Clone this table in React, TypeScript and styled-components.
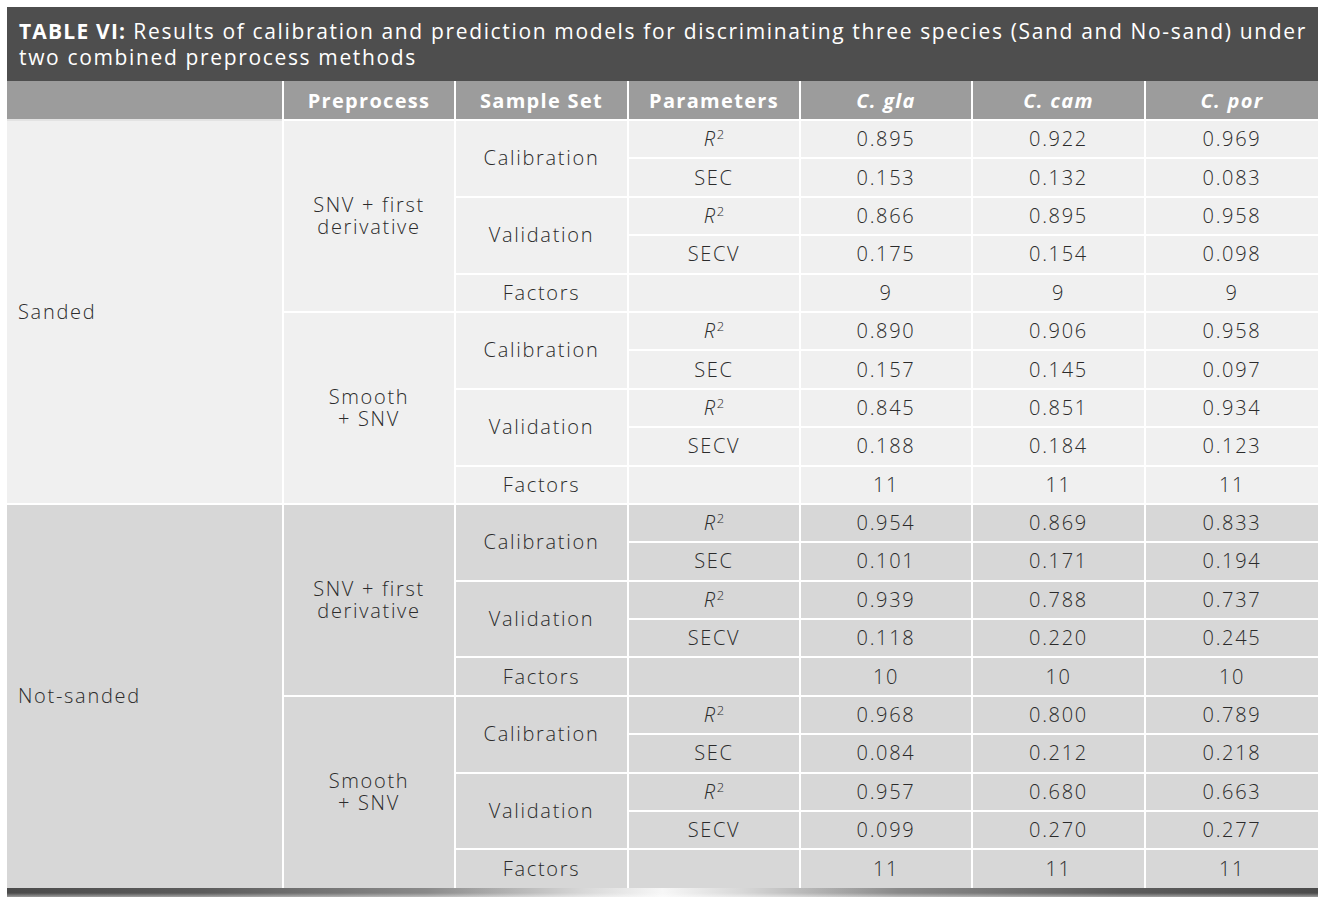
import React from "react";
import styled, { createGlobalStyle } from "styled-components";

const GlobalStyle = createGlobalStyle`
  html, body { margin: 0; padding: 0; background: #ffffff; }
  body { font-family: "Open Sans", "Liberation Sans", sans-serif; }
`;

const Page = styled.div`
  padding: 7px 10px 12px 7px;
  width: 1311px;
`;

const Caption = styled.div`
  background: #4e4e4e;
  color: #ffffff;
  font-size: 21px;
  line-height: 26px;
  padding: 11px 6px 11px 12px;
  letter-spacing: 1.65px;
  white-space: nowrap;
  overflow: hidden;
`;

const CaptionLabel = styled.span`
  font-weight: 700;
  letter-spacing: 1.2px;
`;

const Table = styled.table`
  width: 1311px;
  table-layout: fixed;
  border-collapse: collapse;
  border-style: hidden;
  font-size: 20px;
  color: #2b2b2b;
`;

const HeadCell = styled.th<{ $italic?: boolean }>`
  background: #9c9c9c;
  color: #ffffff;
  font-weight: 700;
  font-style: ${(p) => (p.$italic ? "italic" : "normal")};
  letter-spacing: 1.3px;
  height: 38px;
  padding: 0;
  text-align: center;
  border-left: 2px solid #ffffff;
  border-right: 2px solid #ffffff;
  &:first-child { border-left: none; }
`;

const Row = styled.tr<{ $dark: boolean }>`
  height: 38.4px;
  background: ${(p) => (p.$dark ? "#d7d7d7" : "#f0f0f0")};
`;

const Cell = styled.td<{ $align?: "left" | "center" }>`
  padding: 0 ${(p) => (p.$align === "left" ? "11px" : "4px")};
  text-align: ${(p) => p.$align ?? "center"};
  vertical-align: middle;
  border: 2px solid #ffffff;
  line-height: 22px;
  font-weight: 300;
  letter-spacing: 1.7px;
`;

const GroupCell = styled(Cell)`
  border-top-color: #e3e3e3;
`;

const Italic = styled.i`
  font-style: italic;
`;

const Sup = styled.sup`
  font-size: 13px;
  font-style: normal;
  vertical-align: 7px;
  line-height: 0;
  letter-spacing: 0;
`;

const BottomBar = styled.div`
  height: 9px;
  background:
    linear-gradient(to bottom, rgba(255,255,255,0) 0%, rgba(255,255,255,0) 55%, rgba(255,255,255,0.45) 100%),
    linear-gradient(to right, #4b4b4b 0%, #5c5c5c 15%, #8a8a8a 32%, #d8d8d8 44%, #f7f7f7 50%, #d8d8d8 56%, #8a8a8a 68%, #5c5c5c 85%, #4b4b4b 100%);
`;

type Vals = [string, string, string];

interface Method {
  name: string[];
  cal: { r2: Vals; sec: Vals };
  val: { r2: Vals; secv: Vals };
  factors: Vals;
}

interface Group {
  name: string;
  dark: boolean;
  methods: Method[];
}

const groups: Group[] = [
  {
    name: "Sanded",
    dark: false,
    methods: [
      {
        name: ["SNV + first", "derivative"],
        cal: { r2: ["0.895", "0.922", "0.969"], sec: ["0.153", "0.132", "0.083"] },
        val: { r2: ["0.866", "0.895", "0.958"], secv: ["0.175", "0.154", "0.098"] },
        factors: ["9", "9", "9"],
      },
      {
        name: ["Smooth", "+ SNV"],
        cal: { r2: ["0.890", "0.906", "0.958"], sec: ["0.157", "0.145", "0.097"] },
        val: { r2: ["0.845", "0.851", "0.934"], secv: ["0.188", "0.184", "0.123"] },
        factors: ["11", "11", "11"],
      },
    ],
  },
  {
    name: "Not-sanded",
    dark: true,
    methods: [
      {
        name: ["SNV + first", "derivative"],
        cal: { r2: ["0.954", "0.869", "0.833"], sec: ["0.101", "0.171", "0.194"] },
        val: { r2: ["0.939", "0.788", "0.737"], secv: ["0.118", "0.220", "0.245"] },
        factors: ["10", "10", "10"],
      },
      {
        name: ["Smooth", "+ SNV"],
        cal: { r2: ["0.968", "0.800", "0.789"], sec: ["0.084", "0.212", "0.218"] },
        val: { r2: ["0.957", "0.680", "0.663"], secv: ["0.099", "0.270", "0.277"] },
        factors: ["11", "11", "11"],
      },
    ],
  },
];

const R2 = () => (
  <>
    <Italic>R</Italic>
    <Sup>2</Sup>
  </>
);

const ValueCells = ({ v }: { v: Vals }) => (
  <>
    {v.map((x, i) => (
      <Cell key={i}>{x}</Cell>
    ))}
  </>
);

export default function App() {
  const rows: React.ReactNode[] = [];
  groups.forEach((g, gi) => {
    g.methods.forEach((m, mi) => {
      const first = mi === 0;
      rows.push(
        <Row $dark={g.dark} key={`${gi}-${mi}-1`}>
          {first && (
            <GroupCell rowSpan={10} $align="left">
              {g.name}
            </GroupCell>
          )}
          <Cell rowSpan={5}>
            {m.name[0]}
            <br />
            {m.name[1]}
          </Cell>
          <Cell rowSpan={2}>Calibration</Cell>
          <Cell>
            <R2 />
          </Cell>
          <ValueCells v={m.cal.r2} />
        </Row>,
        <Row $dark={g.dark} key={`${gi}-${mi}-2`}>
          <Cell>SEC</Cell>
          <ValueCells v={m.cal.sec} />
        </Row>,
        <Row $dark={g.dark} key={`${gi}-${mi}-3`}>
          <Cell rowSpan={2}>Validation</Cell>
          <Cell>
            <R2 />
          </Cell>
          <ValueCells v={m.val.r2} />
        </Row>,
        <Row $dark={g.dark} key={`${gi}-${mi}-4`}>
          <Cell>SECV</Cell>
          <ValueCells v={m.val.secv} />
        </Row>,
        <Row $dark={g.dark} key={`${gi}-${mi}-5`}>
          <Cell>Factors</Cell>
          <Cell />
          <ValueCells v={m.factors} />
        </Row>
      );
    });
  });

  return (
    <>
      <GlobalStyle />
      <Page>
        <Caption>
          <CaptionLabel>TABLE VI:</CaptionLabel> Results of calibration and prediction models for
          discriminating three species (Sand and No-sand) under
          <br />
          two combined preprocess methods
        </Caption>
        <Table>
          <colgroup>
            <col style={{ width: 276 }} />
            <col style={{ width: 172 }} />
            <col style={{ width: 173 }} />
            <col style={{ width: 172 }} />
            <col style={{ width: 172 }} />
            <col style={{ width: 173 }} />
            <col style={{ width: 173 }} />
          </colgroup>
          <thead>
            <tr>
              <HeadCell />
              <HeadCell>Preprocess</HeadCell>
              <HeadCell>Sample Set</HeadCell>
              <HeadCell>Parameters</HeadCell>
              <HeadCell $italic>C. gla</HeadCell>
              <HeadCell $italic>C. cam</HeadCell>
              <HeadCell $italic>C. por</HeadCell>
            </tr>
          </thead>
          <tbody>{rows}</tbody>
        </Table>
        <BottomBar />
      </Page>
    </>
  );
}
